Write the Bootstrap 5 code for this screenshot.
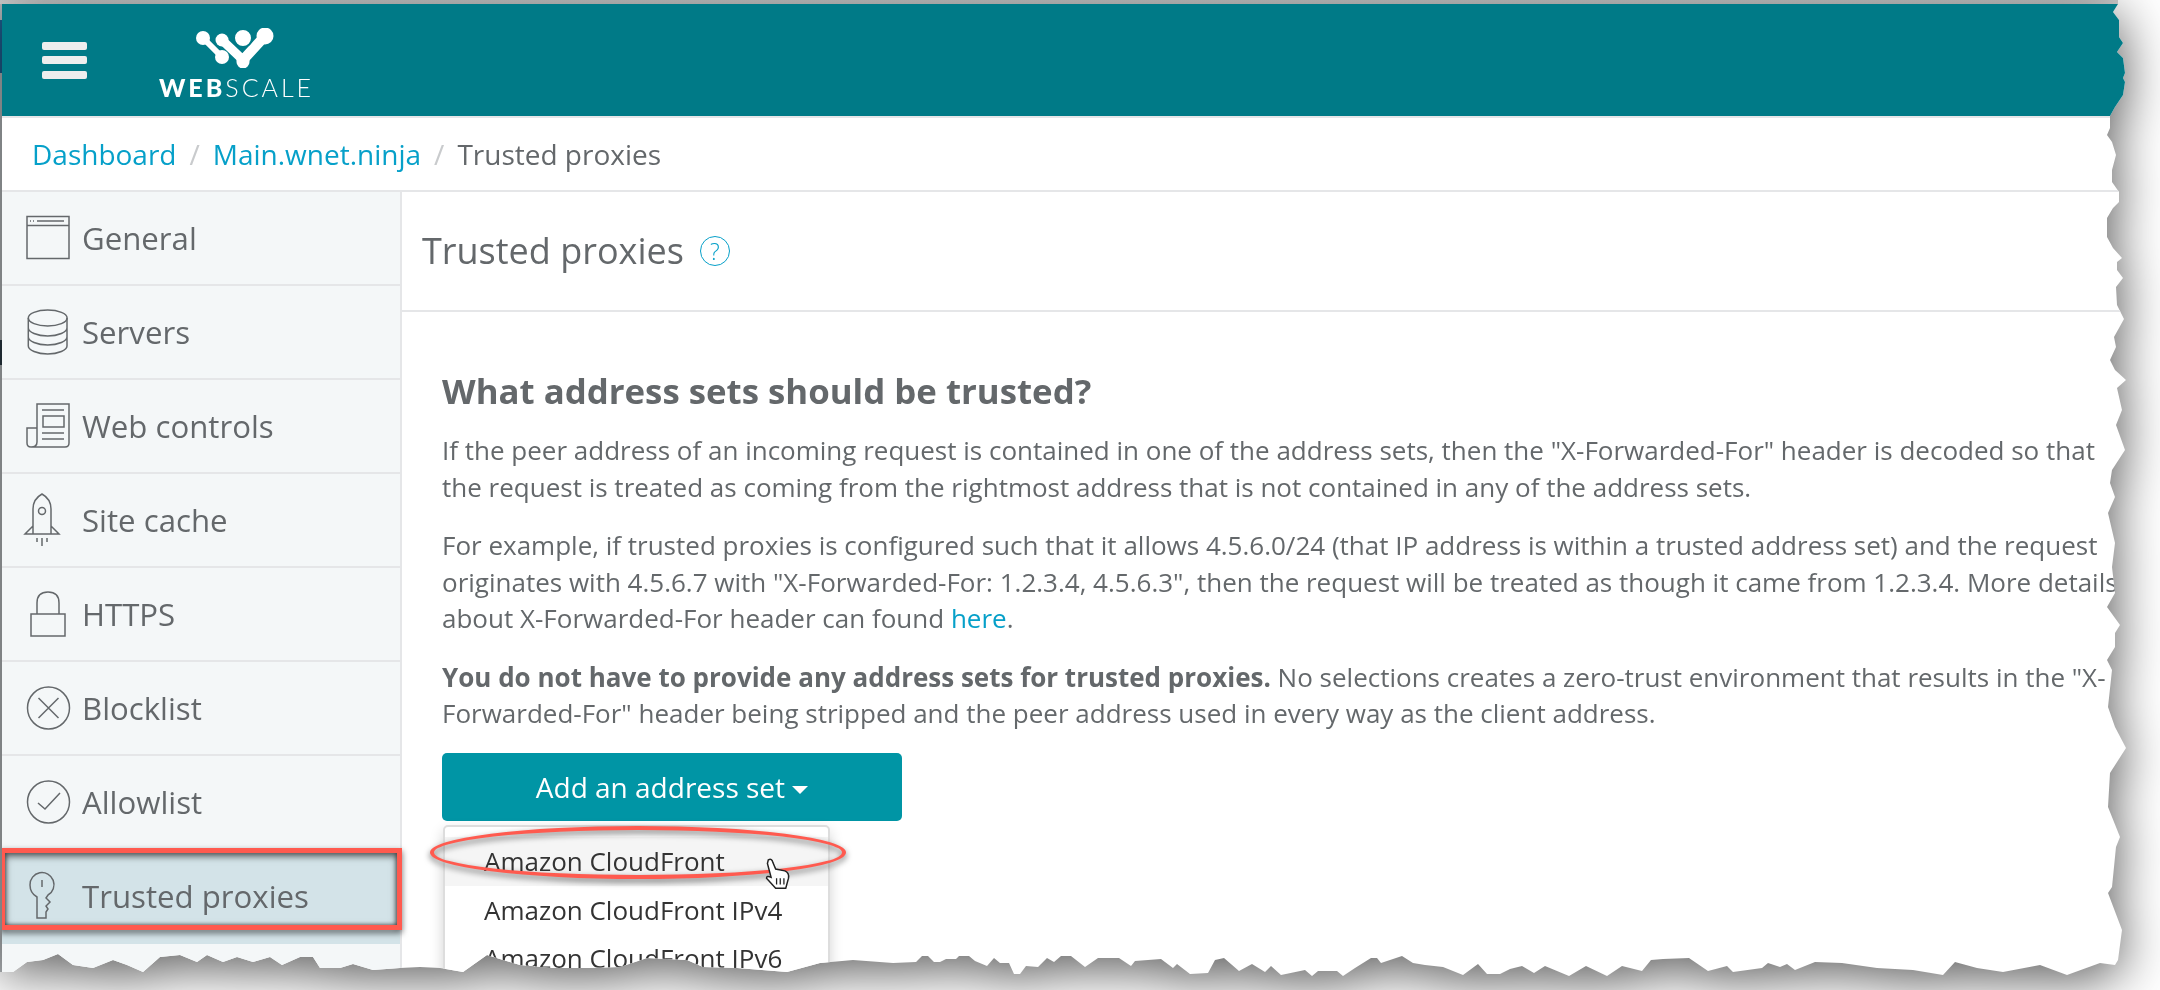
<!DOCTYPE html>
<html lang="en">
<head>
<meta charset="utf-8">
<title>Trusted proxies</title>
<link href="https://cdn.jsdelivr.net/npm/bootstrap@5.3.0/dist/css/bootstrap.min.css" rel="stylesheet">
<style>
html,body{height:100%;overflow:hidden}
body{font-family:"Open Sans","Liberation Sans",sans-serif;color:#64686b;
background:
linear-gradient(#1f5f8f,#1f5f8f) 0 20px/2px 53px no-repeat,
linear-gradient(#2b3a45,#2b3a45) 0 340px/2px 25px no-repeat,
linear-gradient(#cfcfcf,#d4d4d4) 0 0/2118px 4px no-repeat,
linear-gradient(#b4b8bb,#b4b8bb) 0 0/2px 972px no-repeat,#fff}
.ts-frame{position:relative;width:2160px;height:990px;overflow:hidden;filter:drop-shadow(2px 10px 26px rgba(0,0,0,.64))}
.ts-sheet{width:2160px;height:990px;background:#fff;padding-top:4px;padding-left:2px;display:flex;flex-direction:column;
clip-path:polygon(2px 4px,2118px 4px,2113px 12px,2119px 20px,2119px 37px,2123px 43px,2117px 52px,2123px 58px,2125px 73px,2123px 78px,2125px 82px,2123px 95px,2115px 107px,2110px 116px,2110px 128px,2107px 135px,2112px 142px,2116px 155px,2112px 170px,2112px 182px,2119px 192px,2119px 202px,2113px 208px,2107px 218px,2107px 237px,2113px 248px,2122px 258px,2117px 262px,2117px 270px,2123px 278px,2116px 287px,2117px 305px,2124px 319px,2114px 337px,2116px 347px,2110px 360px,2115px 370px,2126px 380px,2117px 388px,2122px 410px,2116px 425px,2125px 450px,2112px 470px,2110px 483px,2115px 497px,2108px 513px,2115px 543px,2112px 567px,2115px 593px,2107px 607px,2120px 625px,2115px 633px,2115px 647px,2107px 660px,2112px 670px,2108px 707px,2115px 727px,2126px 748px,2110px 773px,2108px 807px,2120px 837px,2116px 847px,2112px 887px,2108px 893px,2122px 930px,2118px 960px,2115px 965px,2100px 963px,2067px 975px,2040px 965px,2003px 972px,1977px 968px,1955px 962px,1943px 975px,1913px 970px,1877px 968px,1842px 963px,1815px 962px,1795px 970px,1787px 964px,1780px 967px,1768px 963px,1762px 968px,1733px 972px,1727px 966px,1708px 971px,1689px 958px,1663px 959px,1651px 960px,1642px 971px,1622px 966px,1607px 976px,1586px 966px,1569px 976px,1545px 966px,1534px 973px,1522px 966px,1510px 969px,1500px 974px,1487px 974px,1478px 964px,1463px 975px,1443px 967px,1425px 965px,1413px 963px,1402px 956px,1381px 963px,1377px 958px,1371px 958px,1355px 968px,1343px 976px,1337px 971px,1318px 971px,1312px 976px,1305px 970px,1281px 975px,1271px 966px,1265px 972px,1252px 964px,1239px 971px,1224px 958px,1215px 960px,1208px 973px,1190px 974px,1177px 964px,1173px 968px,1161px 959px,1135px 961px,1131px 966px,1119px 958px,1098px 958px,1085px 967px,1071px 956px,1061px 956px,1054px 962px,1047px 958px,1038px 967px,1026px 966px,1020px 974px,1014px 974px,1009px 963px,1000px 963px,994px 958px,987px 966px,975px 961px,969px 956px,959px 956px,956px 959px,946px 959px,940px 962px,934px 962px,928px 956px,922px 956px,916px 962px,893px 963px,853px 960px,820px 963px,787px 972px,737px 968px,703px 967px,687px 960px,647px 958px,620px 967px,587px 968px,553px 968px,520px 965px,503px 960px,487px 955px,463px 972px,440px 968px,420px 967px,400px 968px,373px 970px,353px 964px,340px 968px,320px 968px,313px 957px,300px 957px,282px 965px,270px 957px,253px 962px,237px 957px,223px 962px,207px 955px,197px 962px,180px 955px,160px 957px,143px 972px,127px 965px,113px 960px,93px 968px,73px 965px,58px 954px,43px 960px,27px 962px,13px 972px,2px 972px)}
.ts-top{height:112px;background:#007a87;flex:none}
.ts-burger{width:45px;height:37px;margin-left:40px;display:flex;flex-direction:column;justify-content:space-between}
.ts-burger span{display:block;height:8px;border-radius:2px;background:#eee}
.ts-logo{margin-left:73px;width:150px;display:flex;flex-direction:column;align-items:center;padding-top:7px}
.ts-logo svg{display:block;margin-bottom:7px}
.ts-wordmark{font-size:25px;line-height:24px;color:#fff;font-weight:300;letter-spacing:3px;margin-right:-3px;font-family:"Lato","Open Sans",sans-serif;white-space:nowrap}
.ts-wordmark b{font-weight:900}
.ts-crumbs{height:76px;flex:none;border-top:2px solid #e5e6e8;border-bottom:2px solid #e5e6e8;padding-left:30px;font-size:28px}
.ts-crumbs .breadcrumb{--bs-breadcrumb-divider-color:#c9cbcd;--bs-breadcrumb-item-active-color:#64686b;--bs-breadcrumb-item-padding-x:13px}
.ts-crumbs a{color:#06a0c9;text-decoration:none}
.ts-body{flex:1;min-height:0;display:flex}
.ts-side{width:400px;flex:none;background:#f4f7f8;border-right:2px solid #e5e6e8;overflow:hidden}
.ts-item{height:94px;padding-left:24px;border-bottom:2px solid #e5e6e8;font-size:31.2px;color:#64686b;display:flex;align-items:center}
.ts-ico{width:46px;height:46px;flex:none;margin-right:10px;fill:none;stroke:#64686b;stroke-width:1.5;overflow:visible}
.ts-item.ts-on{background:#d3e3e8;border-bottom-color:#d3e3e8}
.ts-main{flex:1;min-width:0}
.ts-head{height:120px;padding-left:20px;border-bottom:2px solid #e5e6e8;font-size:36px;gap:16px}
.ts-help{width:30px;height:30px;border:1.5px solid #06a0c9;border-radius:50%;color:#06a0c9;font-size:23px;display:flex;align-items:center;justify-content:center;font-weight:300}
.ts-copy{padding:56px 0 0 40px;font-size:26px;line-height:36.5px;width:1760px}
.ts-copy h2{font-size:34.8px;font-weight:700;color:#64686b;margin:0 0 18px;line-height:46px}
.ts-copy p{margin:0 0 22px;white-space:nowrap}
.ts-copy p.ts-last{margin-bottom:21px}
.ts-copy a{color:#06a0c9;text-decoration:none}
.ts-add{width:460px;height:68px;background:#0095a5;border:0;border-radius:5px;color:#fff;font-size:28px}
.ts-add:hover{background:#0095a5;color:#fff}
.ts-add.dropdown-toggle::after{vertical-align:.12em;border-top-width:.32em;border-left-width:.32em;border-right-width:.32em}
.ts-menu{display:block;position:absolute;left:443px;top:825px;width:387px;height:175px;padding:10px 0 0;border:2px solid #ddd;border-radius:5px;box-shadow:0 6px 14px rgba(0,0,0,.18)}
.ts-menu .dropdown-item{font-size:26px;line-height:36px;padding:6px 39px;height:48.5px;color:#333}
.ts-menu .ts-hover{background:#f5f5f5}
.ts-mark{position:absolute;z-index:1001;border:0 solid #ff5a4f;filter:drop-shadow(0 3px 3px rgba(0,0,0,.6))}
.ts-rect{left:0;top:848px;width:402px;height:82px;border-width:5px;box-shadow:inset 0 0 4px rgba(0,0,0,.6)}
.ts-oval{left:430px;top:826px;width:416px;height:53px;border-width:4.5px;border-radius:50%}
.ts-cursor{position:absolute;z-index:1002;left:763px;top:858px;width:29px;height:33px}
</style>
</head>
<body>
<div class="ts-frame">
  <div class="ts-sheet">
    <header class="ts-top d-flex align-items-center">
      <div class="ts-burger"><span></span><span></span><span></span></div>
      <div class="ts-logo">
        <svg width="80" height="40" viewBox="0 0 80 40" aria-hidden="true"><g fill="#fff" stroke="#fff" stroke-linecap="round"><path d="M8 10 27 29" fill="none" stroke-width="6"/><path d="M27 12 48 32" fill="none" stroke-width="9"/><path d="M70 8 48 32" fill="none" stroke-width="10"/><path d="M48 32V34" fill="none" stroke-width="13"/><circle cx="8" cy="10" r="7" stroke="none"/><circle cx="27" cy="12" r="6.5" stroke="none"/><circle cx="27" cy="29" r="7" stroke="none"/><circle cx="70" cy="8" r="8.5" stroke="none"/></g><circle cx="48" cy="10" r="9" fill="#fff" stroke="#007a87" stroke-width="2"/></svg>
        <div class="ts-wordmark"><b>WEB</b>SCALE</div>
      </div>
    </header>
    <nav class="ts-crumbs d-flex align-items-center" aria-label="breadcrumb">
      <ol class="breadcrumb mb-0">
        <li class="breadcrumb-item"><a href="#">Dashboard</a></li>
        <li class="breadcrumb-item"><a href="#">Main.wnet.ninja</a></li>
        <li class="breadcrumb-item active" aria-current="page">Trusted proxies</li>
      </ol>
    </nav>
    <div class="ts-body">
      <aside class="ts-side">
        <div class="ts-item"><svg class="ts-ico" viewBox="0 0 46 46"><rect x="1" y="1.5" width="42" height="42"/><path d="M1 10.5H43M11 6H38M4 6H5M7 6H8"/></svg>General</div>
        <div class="ts-item"><svg class="ts-ico" viewBox="0 0 46 46"><ellipse cx="21.7" cy="9" rx="19.4" ry="8"/><path d="M2.3 9V37C2.3 41 11 45 21.7 45S41 41 41 37V9M2.3 19C2.3 23 11 27 21.7 27S41 23 41 19M2.3 28C2.3 32 11 36 21.7 36S41 32 41 28"/></svg>Servers</div>
        <div class="ts-item"><svg class="ts-ico" viewBox="0 0 46 46"><path d="M11 39V1H43V40Q43 44 39 44H5Q1 44 1 40V25H11M5 44Q11 44 11 39"/><path d="M16 7H38M17 13H38V24H17ZM16 30H38M16 36H38"/></svg>Web controls</div>
        <div class="ts-item"><svg class="ts-ico" viewBox="0 0 46 46"><path d="M7 37V12Q7 2 16-3 25 2 25 12V37ZM7 29-1 37H7M25 29 33 37H25M11 41V45M16 41V49M21 41V45"/><circle cx="16" cy="14" r="3.5"/></svg>Site cache</div>
        <div class="ts-item"><svg class="ts-ico" viewBox="0 0 46 46"><rect x="5" y="23" width="34" height="22"/><path d="M11 23V12Q11 1 22 1 33 1 33 12V23"/></svg>HTTPS</div>
        <div class="ts-item"><svg class="ts-ico" viewBox="0 0 46 46"><circle cx="22.5" cy="23" r="21"/><path d="M12.5 13 32.5 33M32.5 13 12.5 33"/></svg>Blocklist</div>
        <div class="ts-item"><svg class="ts-ico" viewBox="0 0 46 46"><circle cx="22.5" cy="23" r="21"/><path d="M12 24 19 30 34 14"/></svg>Allowlist</div>
        <div class="ts-item ts-on"><svg class="ts-ico" viewBox="0 0 46 46"><path d="M11 45V24Q4 20 4 12A12 12 0 1 1 22 22L20 25 24 29 20 33 22 36 20 39V45Z"/><path d="M16 7V14"/></svg>Trusted proxies</div>
        <div class="ts-item"></div>
      </aside>
      <main class="ts-main">
        <div class="ts-head d-flex align-items-center"><span>Trusted proxies</span><span class="ts-help">?</span></div>
        <div class="ts-copy">
          <h2>What address sets should be trusted?</h2>
          <p>If the peer address of an incoming request is contained in one of the address sets, then the "X-Forwarded-For" header is decoded so that<br>the request is treated as coming from the rightmost address that is not contained in any of the address sets.</p>
          <p>For example, if trusted proxies is configured such that it allows 4.5.6.0/24 (that IP address is within a trusted address set) and the request<br>originates with 4.5.6.7 with "X-Forwarded-For: 1.2.3.4, 4.5.6.3", then the request will be treated as though it came from 1.2.3.4. More details<br>about X-Forwarded-For header can found <a href="#">here</a>.</p>
          <p class="ts-last"><strong>You do not have to provide any address sets for trusted proxies.</strong> No selections creates a zero-trust environment that results in the "X-<br>Forwarded-For" header being stripped and the peer address used in every way as the client address.</p>
          <button type="button" class="btn ts-add dropdown-toggle">Add an address set</button>
        </div>
      </main>
    </div>
    <ul class="dropdown-menu ts-menu list-unstyled">
      <li><a class="dropdown-item ts-hover" href="#">Amazon CloudFront</a></li>
      <li><a class="dropdown-item" href="#">Amazon CloudFront IPv4</a></li>
      <li><a class="dropdown-item" href="#">Amazon CloudFront IPv6</a></li>
    </ul>
    <div class="ts-mark ts-rect"></div>
    <div class="ts-mark ts-oval"></div>
    <svg class="ts-cursor" viewBox="0 0 30 36" aria-hidden="true"><path d="M5 2Q9 0 10 5L13 12 23 14Q28 16 27 22L24 33H13L3 22Q3 19 8 21L4 6Z" fill="#fff" stroke="#222" stroke-width="1.6"/><path d="M14 22V29M18 22V29M22 22V29" stroke="#222" stroke-width="1.4"/></svg>
  </div>
</div>
</body>
</html>
